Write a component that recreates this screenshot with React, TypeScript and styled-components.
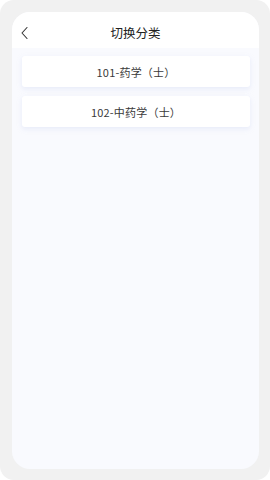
import styled, { createGlobalStyle } from 'styled-components';

const GlobalStyle = createGlobalStyle`
    html, body {
        margin: 0;
        padding: 0;
        background: #ffffff;
    }
    body {
        font-family: 'Noto Sans CJK SC', 'Noto Sans', sans-serif;
    }
`

const categories = ['101-药学（士）', '102-中药学（士）'];

export default function App() {
    return (
        <>
            <GlobalStyle />
            <Frame>
                <Panel>
                    <Header>
                        <BackButton aria-label="back">
                            <svg width="10" height="14" viewBox="0 0 10 14" fill="none">
                                <path d="M7 1.5L2 7l5 5.5" stroke="#333" strokeWidth="1.1" strokeLinecap="round" strokeLinejoin="round" />
                            </svg>
                        </BackButton>
                        <Title>切换分类</Title>
                    </Header>
                    <List>
                        {categories.map((c) => (
                            <Item key={c}>{c}</Item>
                        ))}
                    </List>
                </Panel>
            </Frame>
        </>
    );
}

const Frame = styled.div`
    width: 270px;
    height: 480px;
    box-sizing: border-box;
    padding: 12px 11px 11px 12px;
    background: #f1f1f1;
    border-radius: 14px;
    display: flex;
`

const Panel = styled.div`
    flex: 1;
    display: flex;
    flex-direction: column;
    background: #f9fafe;
    border-radius: 18px;
    overflow: hidden;
`

const Header = styled.div`
    position: relative;
    height: 36px;
    background: #ffffff;
    display: flex;
    align-items: center;
    justify-content: center;
    flex-shrink: 0;
`

const BackButton = styled.button`
    position: absolute;
    left: 8px;
    top: 14px;
    border: 0;
    padding: 0;
    background: none;
    display: flex;
`

const Title = styled.span`
    font-size: 12.5px;
    color: #222;
    font-weight: 400;
    margin-top: 4px;
`

const List = styled.div`
    display: flex;
    flex-direction: column;
    gap: 9px;
    padding: 8px 9px 0 10px;
`

const Item = styled.div`
    height: 31px;
    background: #ffffff;
    border-radius: 3px;
    box-shadow: 0 2px 5px rgba(200, 210, 240, 0.35);
    display: flex;
    align-items: center;
    justify-content: center;
    font-size: 11px;
    color: #3a3a3a;
    letter-spacing: 0.2px;
`
